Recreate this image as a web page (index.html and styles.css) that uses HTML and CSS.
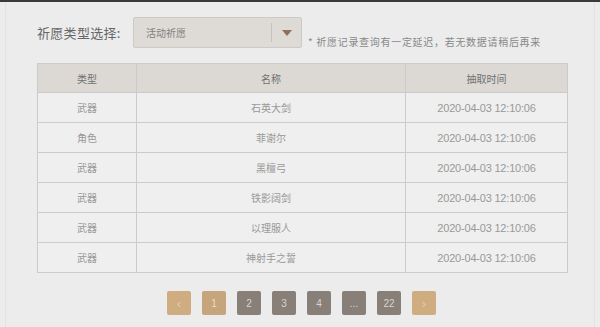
FILE: index.html
```html
<!DOCTYPE html>
<html lang="zh-CN">
<head>
    <meta charset="UTF-8">
    <title>祈愿记录</title>
    <link rel="stylesheet" href="styles.css">
</head>
<body>
<div class="topbar"></div>
<div class="page">
    <div class="filter">
        <span class="filter-label">祈愿类型选择:</span>
        <div class="select">
            <span class="select-text">活动祈愿</span>
            <span class="select-arrow">
                <svg width="10" height="6" viewBox="0 0 10 6"><path d="M0 0 L10 0 L5 6 Z" fill="#8f6f58"/></svg>
            </span>
        </div>
        <span class="note">* 祈愿记录查询有一定延迟，若无数据请稍后再来</span>
    </div>

    <table class="records">
        <thead>
            <tr><th class="col-type">类型</th><th class="col-name">名称</th><th class="col-time">抽取时间</th></tr>
        </thead>
        <tbody>
            <tr><td>武器</td><td>石英大剑</td><td class="time">2020-04-03 12:10:06</td></tr>
            <tr><td>角色</td><td>菲谢尔</td><td class="time">2020-04-03 12:10:06</td></tr>
            <tr><td>武器</td><td>黑檀弓</td><td class="time">2020-04-03 12:10:06</td></tr>
            <tr><td>武器</td><td>铁影阔剑</td><td class="time">2020-04-03 12:10:06</td></tr>
            <tr><td>武器</td><td>以理服人</td><td class="time">2020-04-03 12:10:06</td></tr>
            <tr><td>武器</td><td>神射手之誓</td><td class="time">2020-04-03 12:10:06</td></tr>
        </tbody>
    </table>

    <div class="pager">
        <span class="page-btn arrow">&lsaquo;</span>
        <span class="page-btn active">1</span>
        <span class="page-btn">2</span>
        <span class="page-btn">3</span>
        <span class="page-btn">4</span>
        <span class="page-btn">...</span>
        <span class="page-btn">22</span>
        <span class="page-btn arrow">&rsaquo;</span>
    </div>
</div>
</body>
</html>
```

FILE: styles.css
```css
html, body {
    margin: 0;
    padding: 0;
}

body {
    width: 600px;
    height: 327px;
    overflow: hidden;
    background: #ececec;
    font-family: "Noto Sans CJK SC", "Liberation Sans", sans-serif;
    color: #777;
}

.topbar {
    height: 2px;
    background: #3a3a3a;
}

.page {
    margin: 0 5px;
    height: 325px;
    border-left: 1px solid #e2e2e2;
    border-right: 1px solid #e2e2e2;
    padding: 15px 26px 0 31px;
    box-sizing: border-box;
}

.filter {
    display: flex;
    align-items: center;
    height: 31px;
}

.filter-label {
    font-size: 13px;
    color: #666;
    width: 96px;
    letter-spacing: 0.3px;
}

.select {
    display: flex;
    align-items: center;
    width: 169px;
    height: 31px;
    box-sizing: border-box;
    background: #dedad5;
    border: 1px solid #cdc9c4;
    border-radius: 2px;
}

.select-text {
    flex: 1;
    font-size: 10px;
    color: #808080;
    padding-left: 12px;
}

.select-arrow {
    width: 29px;
    height: 19px;
    border-left: 1px solid #c6c2bd;
    display: flex;
    align-items: center;
    justify-content: center;
}

.note {
    font-size: 10px;
    color: #888;
    margin-left: 6px;
    margin-top: 18px;
    letter-spacing: 0.7px;
}

.records {
    margin-top: 15px;
    border-collapse: collapse;
    width: 531px;
    font-size: 10px;
    text-align: center;
}

.records th, .records td {
    border: 1px solid #cbcbcb;
    padding: 0;
}

.records th {
    height: 28px;
    background: #dcd9d4;
    color: #707070;
    font-weight: normal;
}

.records td {
    height: 29px;
    background: #efefef;
    color: #999;
}

.records td.time {
    font-family: "Liberation Sans", sans-serif;
    font-size: 11px;
    letter-spacing: -0.2px;
}

.col-type { width: 98px; }
.col-name { width: 268px; }

.pager {
    display: flex;
    justify-content: center;
    gap: 11px;
    margin-top: 18px;
    padding-right: 2px;
}

.page-btn {
    width: 24px;
    height: 24px;
    border-radius: 2px;
    background: #877f78;
    color: #d8d4cf;
    font-family: "Liberation Sans", sans-serif;
    font-size: 10px;
    display: flex;
    align-items: center;
    justify-content: center;
}

.page-btn.active {
    background: #c6a57d;
    color: #e9dcc8;
}

.page-btn.arrow {
    background: #d0ad80;
    color: #e4ccab;
    font-size: 13px;
}
```
